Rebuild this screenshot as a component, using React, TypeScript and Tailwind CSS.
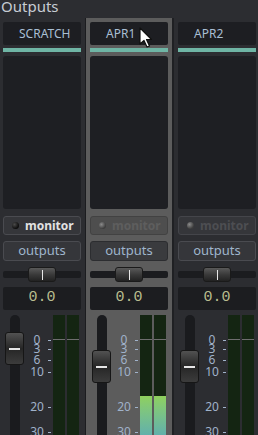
import React from "react";

type StripProps = {
  name: string;
  selected?: boolean;
  monitorOn?: boolean;
  knobTop: string;
  level?: boolean;
  className: string;
};

const labels = [
  { t: "0", top: "top-[18px]" },
  { t: "3", top: "top-[27px]" },
  { t: "6", top: "top-[38px]" },
  { t: "10", top: "top-[50px]" },
  { t: "20", top: "top-[85px]" },
  { t: "30", top: "top-[110px]" },
];

const Strip = ({ name, selected, monitorOn, knobTop, level, className }: StripProps) => {
  return (
    <div className={`flex flex-col pt-[4px] ${className}`}>
      <div className="w-[78px] h-[23px] bg-[#1d1e22] rounded-[2px] flex items-center pl-[16px] text-[12px] text-[#a9bfd4]">
        {name}
      </div>
      <div className="w-[78px] h-[4px] mt-[3px] bg-[#6fb5a5]" />
      <div className="w-[78px] h-[153px] mt-[4px] bg-[#1e1f23] rounded-[3px]" />

      {/* monitor */}
      <div
        className={`w-[78px] h-[19px] mt-[7px] rounded-[3px] border flex items-center gap-[6px] pl-[8px] ${
          monitorOn
            ? "bg-[#35363a] border-[#4a4b50]"
            : selected
            ? "bg-[#4e4e4e] border-[#424242]"
            : "bg-[#35363a] border-[#44454a]"
        }`}
      >
        <div
          className={`w-[7px] h-[7px] rounded-full ${
            monitorOn
              ? "bg-[radial-gradient(circle_at_35%_35%,#4a4a4a,#0c0c0c_70%)]"
              : "bg-[radial-gradient(circle_at_35%_35%,#8a8a8a,#3c3c3c_70%)]"
          }`}
        />
        <span
          className={`text-[12px] font-bold leading-none ${
            monitorOn ? "text-[#e2e2e2]" : selected ? "text-[#5e5e5e]" : "text-[#4d4e52]"
          }`}
        >
          monitor
        </span>
      </div>

      {/* outputs */}
      <div
        className={`w-[78px] h-[20px] mt-[6px] rounded-[3px] border flex items-center justify-center text-[13px] text-[#9fb5cc] ${
          selected ? "bg-[#3a3b3e] border-[#2c2d30]" : "bg-[#35363a] border-[#4a4b50]"
        }`}
      >
        outputs
      </div>

      {/* trim slider */}
      <div className="w-[78px] h-[15px] mt-[6px] relative flex items-center">
        <div className="w-full h-[7px] bg-[#1b1c1f] rounded-[2px]" />
        <div className="absolute left-[25px] top-0 w-[28px] h-[15px] rounded-[3px] border border-[#1a1a1a] bg-gradient-to-b from-[#5a5a5a] via-[#3a3a3a] to-[#222222] flex justify-center items-center">
          <div className="w-px h-[10px] bg-[#e8e8e8]" />
        </div>
      </div>

      {/* gain value */}
      <div className="w-[78px] h-[23px] mt-[5px] bg-[#1c1d20] rounded-[2px] flex items-center justify-center font-['Liberation_Mono',monospace] text-[15px] text-[#b8bc8e]">
        0.0
      </div>

      {/* fader + meter */}
      <div className="w-[78px] flex-1 mt-[5px] flex">
        <div className="w-[19px] ml-[2px] relative flex justify-center">
          <div className="w-[10px] h-full bg-[#1a1b1e] rounded-t-full" />
          <div
            className={`absolute left-0 ${knobTop} w-[19px] h-[33px] rounded-[3px] border border-[#161616] bg-gradient-to-b from-[#525252] via-[#262626] to-[#3c3c3c] flex items-center`}
          >
            <div className="w-full h-[2px] mx-[3px] bg-[#e6e6e6]" />
          </div>
        </div>
        <div className="w-[28px] ml-[1px] relative">
          {labels.map((l) => (
            <React.Fragment key={l.t}>
              <div
                className={`absolute left-0 ${l.top} w-[24px] h-[14px] leading-[14px] text-center text-[12px] text-[#a0b2ca]`}
              >
                {l.t}
              </div>
              <div className={`absolute left-[23px] ${l.top} mt-[7px] w-[3px] h-px bg-[#a0b2ca]`} />
            </React.Fragment>
          ))}
        </div>
        <div className="flex gap-[2px]">
          {[0, 1].map((i) => (
            <div key={i} className="w-[12px] h-full bg-[#142512] relative">
              <div className="absolute left-0 right-0 top-[24px] h-px bg-[#6e6e6e]" />
              {level && (
                <div className="absolute left-0 right-0 top-[81px] bottom-0 bg-gradient-to-b from-[#8fd05c] to-[#62b0aa]" />
              )}
            </div>
          ))}
        </div>
      </div>
    </div>
  );
};

export default function App() {
  return (
    <div className="w-[258px] h-[435px] overflow-hidden bg-[#2c2d31] font-['Noto_Sans',sans-serif] relative flex flex-col">
      <div className="h-[18px] leading-[12px] text-[15px] text-[#c6ccd4] pl-[1px]">Outputs</div>
      <div className="flex flex-1">
        <Strip name="SCRATCH" monitorOn knobTop="top-[17px]" className="w-[85px] pl-[3px]" />
        <div className="w-px bg-[#1b1c1f]" />
        <Strip name="APR1" selected knobTop="top-[35px]" level className="w-[86px] px-[4px] bg-[#5c5c5c]" />
        <div className="w-[2px] bg-[#1f2023]" />
        <Strip name="APR2" knobTop="top-[35px]" className="flex-1 pl-[4px]" />
      </div>
      {/* mouse pointer */}
      <svg className="absolute left-[139px] top-[27px]" width="14" height="22" viewBox="0 0 14 22">
        <path d="M1 1 L1 17 L5 13.5 L8 20 L10.5 19 L7.5 12.5 L12.5 12.5 Z" fill="#ffffff" stroke="#111111" strokeWidth="1.2" strokeLinejoin="round" />
      </svg>
    </div>
  );
}
